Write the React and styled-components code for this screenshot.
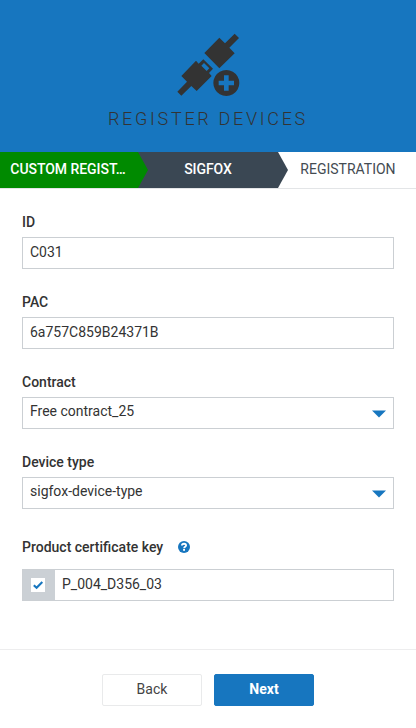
import React from "react";
import styled, { createGlobalStyle } from "styled-components";

const GlobalStyle = createGlobalStyle`
  *, *::before, *::after { box-sizing: border-box; }
  body {
    margin: 0;
    background: #fff;
    color: #333;
    font: 400 14px/20px Roboto, sans-serif;
  }
`;

const Page = styled.div`
  display: flex;
  flex-direction: column;
  height: 728px;
  overflow: hidden;
`;

const Header = styled.header`
  height: 152px;
  padding-top: 28px;
  background: #1776bf;
  display: flex;
  flex-direction: column;
  align-items: center;
  color: #333;
`;

const Title = styled.h1`
  margin: 5px 0 0;
  font-size: 18px;
  line-height: 20px;
  font-weight: 300;
  letter-spacing: 2.7px;
  text-transform: uppercase;
  white-space: nowrap;
`;

const Steps = styled.nav`
  display: flex;
  height: 37px;
  border-bottom: 1px solid #e3e5e7;
`;

const Step = styled.div`
  flex: none;
  width: ${(p) => p.$width}px;
  margin-right: ${(p) => (p.$last ? 0 : -10)}px;
  padding: 7px ${(p) => p.$padRight}px 9px ${(p) => p.$padLeft}px;
  z-index: ${(p) => p.$layer};
  background: ${(p) => p.$bg};
  color: ${(p) => p.$color};
  font-weight: ${(p) => (p.$last ? 400 : 500)};
  letter-spacing: ${(p) => (p.$last ? 0 : -0.05)}px;
  text-align: center;
  text-transform: uppercase;
  clip-path: ${(p) =>
    p.$last ? "none" : "polygon(0 0, calc(100% - 10px) 0, 100% 50%, calc(100% - 10px) 100%, 0 100%)"};
`;

const StepText = styled.span`
  display: block;
  white-space: nowrap;
`;

const Form = styled.form`
  flex: none;
  height: 460px;
  padding: 23px 22px 0;
`;

const Field = styled.div`
  height: ${(p) => (p.$tall ? 85 : 80)}px;
`;

const Label = styled.label`
  display: flex;
  align-items: center;
  height: 20px;
  margin-bottom: ${(p) => (p.$loose ? 12 : 5)}px;
  font-weight: 500;
`;

const Help = styled.svg`
  margin-left: 15px;
`;

const Control = styled.div`
  display: flex;
  justify-content: space-between;
  height: 32px;
  border: 1px solid #cbcfd3;
  padding: ${(p) => (p.$select ? 3 : 4)}px 7px 0;
`;

const Caret = styled.svg`
  margin-top: 9px;
`;

const CheckControl = styled(Control)`
  justify-content: flex-start;
  padding: 0;
`;

const CheckAddon = styled.span`
  display: flex;
  align-items: center;
  justify-content: center;
  width: 32px;
  padding-right: 2px;
  background: #cbd0d5;
`;

const CheckText = styled.span`
  padding: 4px 7px 0;
`;

const Footer = styled.footer`
  flex: 1;
  display: flex;
  justify-content: center;
  gap: 12px;
  padding-top: 24px;
  border-top: 1px solid #ededee;
`;

const Button = styled.button`
  width: 100px;
  height: 32px;
  padding: 0 0 2px;
  border: 1px solid ${(p) => (p.$primary ? "#1776bf" : "#e9eaeb")};
  border-radius: 2px;
  background: ${(p) => (p.$primary ? "#1776bf" : "#fff")};
  color: ${(p) => (p.$primary ? "#fff" : "#444")};
  font: ${(p) => (p.$primary ? 700 : 400)} 14px/20px Roboto, sans-serif;
`;

const PlugIcon = () => (
  <svg width="76" height="76" viewBox="0 0 228 228" fill="#333">
    <path d="M148 29 L165 46 L194 17 L207 30 L178 59 L194 76 L148 121 L103 75 Z" />
    <path
      fillRule="evenodd"
      d="M78 98 L86 107 L100 94 L129 122 L117 135 L125 144 L80 189 L64 174 L34 203 L22 191 L51 161 L34 144 Z M102 105 L94 113 L110 129 L118 121 Z"
    />
    <path
      fillRule="evenodd"
      d="M169 126 a39 39 0 1 0 0.01 0 Z M162 142 H176 V158 H192 V172 H176 V188 H162 V172 H146 V158 H162 Z"
    />
  </svg>
);

const HelpIcon = () => (
  <Help width="12" height="12" viewBox="0 0 12 12">
    <circle cx="6" cy="6" r="6" fill="#1776bf" />
    <path d="M3.9 4.5 C4 2.1 8.1 2.2 8.1 4.4 C8.1 5.8 6.1 5.7 6.1 7.2" fill="none" stroke="#fff" strokeWidth="1.8" />
    <rect x="5.1" y="8" width="1.9" height="1.8" fill="#fff" />
  </Help>
);

const CaretIcon = () => (
  <Caret width="14" height="8" viewBox="0 0 14 8">
    <path d="M0 0.5 H14 L7 7.5 Z" fill="#1776bf" />
  </Caret>
);

const CheckIcon = () => (
  <svg width="14" height="14" viewBox="0 0 14 14">
    <rect width="14" height="14" fill="#fff" />
    <path d="M2.8 7.2 L5.6 9.8 L11.3 4.1" fill="none" stroke="#1776bf" strokeWidth="2.1" />
  </svg>
);

export default function App() {
  return (
    <>
      <GlobalStyle />
      <Page>
        <Header>
          <PlugIcon />
          <Title>Register devices</Title>
        </Header>
        <Steps>
          <Step $width={148} $padLeft={10} $padRight={22} $layer={3} $bg="#008a00" $color="#fff">
            <StepText>Custom regist…</StepText>
          </Step>
          <Step $width={150} $padLeft={20} $padRight={30} $layer={2} $bg="#3a4753" $color="#fff">
            <StepText>Sigfox</StepText>
          </Step>
          <Step $width={138} $padLeft={20} $padRight={18} $layer={1} $bg="#fff" $color="#444b52" $last>
            <StepText>Registration</StepText>
          </Step>
        </Steps>
        <Form>
          <Field>
            <Label>ID</Label>
            <Control>C031</Control>
          </Field>
          <Field>
            <Label>PAC</Label>
            <Control>6a757C859B24371B</Control>
          </Field>
          <Field>
            <Label>Contract</Label>
            <Control $select>Free contract_25<CaretIcon /></Control>
          </Field>
          <Field $tall>
            <Label>Device type</Label>
            <Control $select>sigfox-device-type<CaretIcon /></Control>
          </Field>
          <Field>
            <Label $loose>Product certificate key<HelpIcon /></Label>
            <CheckControl>
              <CheckAddon><CheckIcon /></CheckAddon>
              <CheckText>P_004_D356_03</CheckText>
            </CheckControl>
          </Field>
        </Form>
        <Footer>
          <Button type="button">Back</Button>
          <Button type="button" $primary>Next</Button>
        </Footer>
      </Page>
    </>
  );
}
